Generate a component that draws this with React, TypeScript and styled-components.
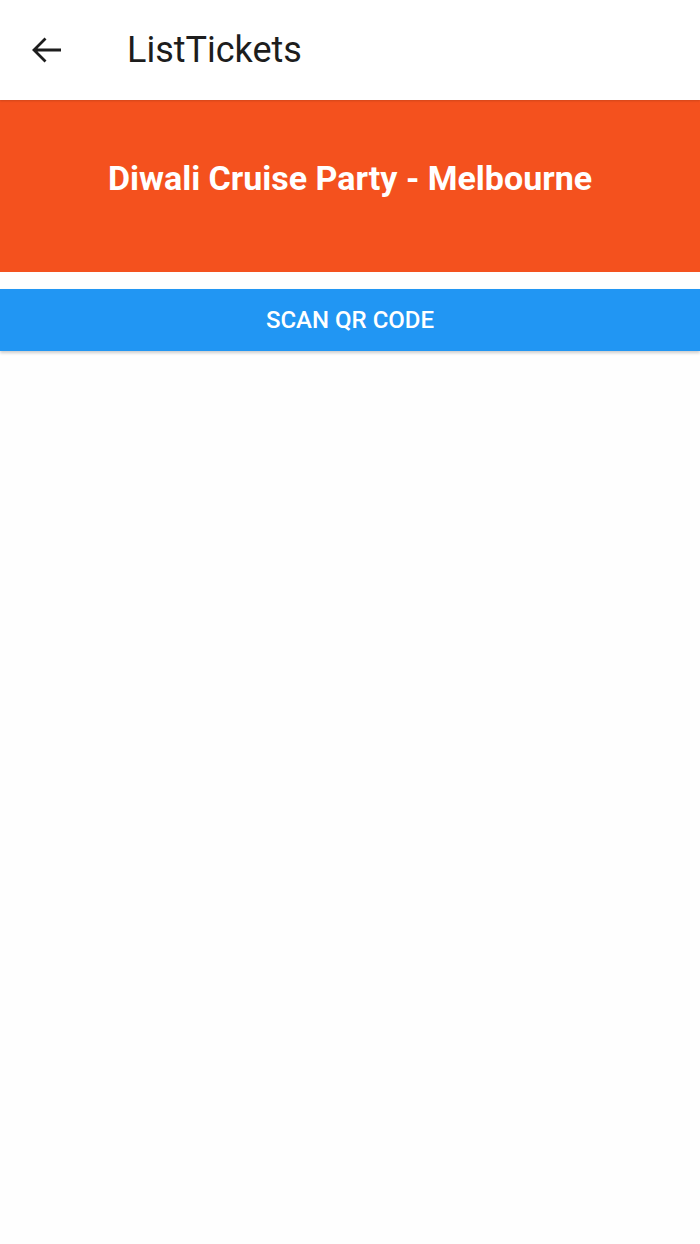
import React from 'react';
import styled, {createGlobalStyle} from "styled-components";

const GlobalStyle = createGlobalStyle`
    body {
        margin: 0;
        background: #fefefe;
        font-family: Roboto, "Noto Sans", sans-serif;
    }
`

const BackIcon = () => (
    <svg width="32" height="28" viewBox="0 0 32 28" fill="none">
        <path d="M30 14H3M14.5 2.5L3 14l11.5 11.5" stroke="#1d1d1d" strokeWidth="2.8"/>
    </svg>
)

export default function App() {
    return (
        <Page>
            <GlobalStyle/>
            <Header>
                <BackButton><BackIcon/></BackButton>
                <HeaderTitle>ListTickets</HeaderTitle>
            </Header>
            <Banner>
                <EventTitle>Diwali Cruise Party - Melbourne</EventTitle>
            </Banner>
            <ScanButton>SCAN QR CODE</ScanButton>
        </Page>
    );
}

const Page = styled.div`
    min-height: 1244px;
    background: #fefefe;
`

const Header = styled.div`
    height: 100px;
    display: flex;
    align-items: center;
    background: #fff;
    box-shadow: 0 1px 2px rgba(0, 0, 0, 0.15);
    position: relative;
    z-index: 1;
`

const BackButton = styled.div`
    width: 127px;
    padding-left: 31px;
    box-sizing: border-box;
    display: flex;
    align-items: center;
`

const HeaderTitle = styled.h1`
    margin: 0;
    font-size: 36px;
    font-weight: 400;
    color: #1d1d1d;
`

const Banner = styled.div`
    height: 172px;
    background: #f4511e;
    padding-top: 58px;
    box-sizing: border-box;
    display: flex;
    justify-content: center;
`

const EventTitle = styled.h2`
    margin: 0;
    font-size: 34px;
    font-weight: 700;
    color: #fff;
    line-height: 40px;
`

const ScanButton = styled.button`
    display: block;
    width: 100%;
    height: 62px;
    margin-top: 17px;
    border: none;
    background: #2196f3;
    color: #fff;
    font-family: Roboto, sans-serif;
    font-size: 24px;
    font-weight: 500;
    box-shadow: 0 2px 3px rgba(0, 0, 0, 0.2);
`
